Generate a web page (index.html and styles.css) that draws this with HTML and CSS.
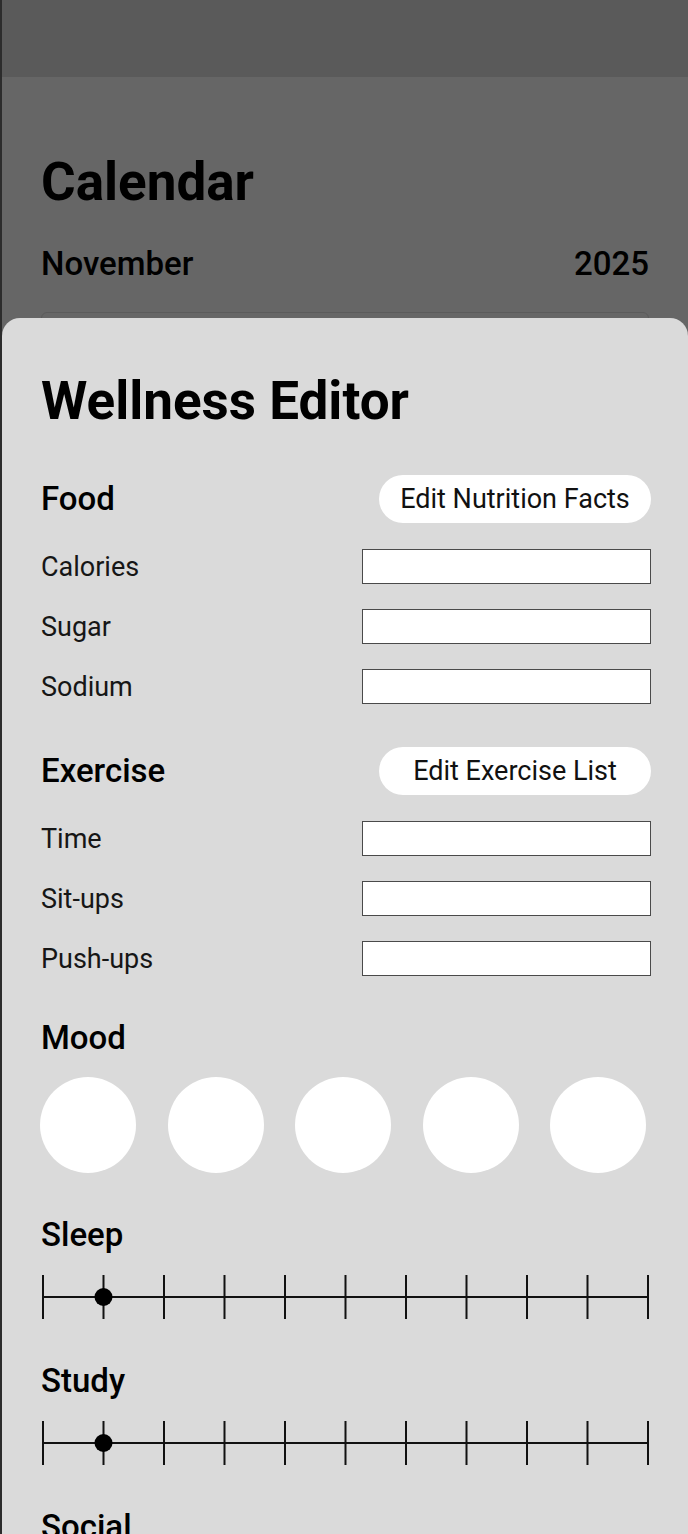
FILE: index.html
```html
<!DOCTYPE html>
<html lang="en">
<head>
  <meta charset="UTF-8" />
  <meta name="viewport" content="width=device-width, initial-scale=1.0" />
  <title>Wellness Editor</title>
  <link rel="stylesheet" href="styles.css">
</head>
<body>
  <div class="screen">

    <!-- dimmed page behind the sheet -->
    <header class="topbar"></header>
    <main class="calendar">
      <h1 class="page-title">Calendar</h1>
      <div class="month-row">
        <span>November</span>
        <span>2025</span>
      </div>
      <div class="month-card"></div>
    </main>

    <!-- bottom sheet -->
    <section class="sheet">
      <h2 class="sheet-title">Wellness Editor</h2>

      <div class="group-head">
        <h3 class="section-title">Food</h3>
        <button class="pill-btn">Edit Nutrition Facts</button>
      </div>
      <div class="fields">
        <label class="field"><span>Calories</span><input type="text"></label>
        <label class="field"><span>Sugar</span><input type="text"></label>
        <label class="field"><span>Sodium</span><input type="text"></label>
      </div>

      <div class="group-head">
        <h3 class="section-title">Exercise</h3>
        <button class="pill-btn">Edit Exercise List</button>
      </div>
      <div class="fields">
        <label class="field"><span>Time</span><input type="text"></label>
        <label class="field"><span>Sit-ups</span><input type="text"></label>
        <label class="field"><span>Push-ups</span><input type="text"></label>
      </div>

      <div class="block">
        <h3 class="section-title">Mood</h3>
        <div class="moods">
          <button class="mood"></button>
          <button class="mood"></button>
          <button class="mood"></button>
          <button class="mood"></button>
          <button class="mood"></button>
        </div>
      </div>

      <div class="block">
        <h3 class="section-title">Sleep</h3>
        <svg class="scale" viewBox="0 0 611 44" width="611" height="44">
          <line x1="2" y1="22" x2="607" y2="22" />
          <g class="ticks">
            <line x1="2" y1="0" x2="2" y2="44" />
            <line x1="62.5" y1="0" x2="62.5" y2="44" />
            <line x1="123" y1="0" x2="123" y2="44" />
            <line x1="183.5" y1="0" x2="183.5" y2="44" />
            <line x1="244" y1="0" x2="244" y2="44" />
            <line x1="304.5" y1="0" x2="304.5" y2="44" />
            <line x1="365" y1="0" x2="365" y2="44" />
            <line x1="425.5" y1="0" x2="425.5" y2="44" />
            <line x1="486" y1="0" x2="486" y2="44" />
            <line x1="546.5" y1="0" x2="546.5" y2="44" />
            <line x1="607" y1="0" x2="607" y2="44" />
          </g>
          <circle cx="62.5" cy="22" r="9" />
        </svg>
      </div>

      <div class="block">
        <h3 class="section-title">Study</h3>
        <svg class="scale" viewBox="0 0 611 44" width="611" height="44">
          <line x1="2" y1="22" x2="607" y2="22" />
          <g class="ticks">
            <line x1="2" y1="0" x2="2" y2="44" />
            <line x1="62.5" y1="0" x2="62.5" y2="44" />
            <line x1="123" y1="0" x2="123" y2="44" />
            <line x1="183.5" y1="0" x2="183.5" y2="44" />
            <line x1="244" y1="0" x2="244" y2="44" />
            <line x1="304.5" y1="0" x2="304.5" y2="44" />
            <line x1="365" y1="0" x2="365" y2="44" />
            <line x1="425.5" y1="0" x2="425.5" y2="44" />
            <line x1="486" y1="0" x2="486" y2="44" />
            <line x1="546.5" y1="0" x2="546.5" y2="44" />
            <line x1="607" y1="0" x2="607" y2="44" />
          </g>
          <circle cx="62.5" cy="22" r="9" />
        </svg>
      </div>

      <div class="block">
        <h3 class="section-title">Social</h3>
      </div>
    </section>

  </div>
</body>
</html>
```

FILE: styles.css
```css
* { box-sizing: border-box; }

html, body {
  margin: 0;
  padding: 0;
  background: #666666;
  font-family: Roboto, 'Liberation Sans', sans-serif;
  color: #000;
}

.screen {
  position: relative;
  height: 1534px;
  overflow: hidden;
  border-left: 2px solid #2c2c2c;
}

/* dimmed calendar page */
.topbar {
  height: 77px;
  background: #5a5a5a;
}

.calendar {
  padding: 0 39px 0 39px;
}

.page-title {
  margin: 75px 0 0;
  font-size: 53px;
  line-height: 60px;
  font-weight: 700;
}

.month-row {
  display: flex;
  justify-content: space-between;
  margin-top: 32px;
  font-size: 33px;
  line-height: 40px;
  font-weight: 500;
}

.month-card {
  margin-top: 28px;
  height: 400px;
  border: 1px solid #5b5b5b;
  border-radius: 6px;
}

/* bottom sheet over the page */
.sheet {
  position: absolute;
  top: 318px;
  left: 0;
  right: 0;
  bottom: 0;
  padding: 53px 37px 0 39px;
  background: #dadada;
  border-radius: 18px 18px 0 0;
}

.sheet-title {
  margin: 0;
  font-size: 53px;
  line-height: 60px;
  font-weight: 700;
}

.section-title {
  margin: 0;
  font-size: 33px;
  line-height: 40px;
  font-weight: 500;
}

.group-head {
  display: flex;
  align-items: center;
  justify-content: space-between;
  height: 48px;
  margin-top: 44px;
}

.fields + .group-head { margin-top: 43px; }

.pill-btn {
  width: 272px;
  height: 48px;
  padding: 0;
  border: none;
  border-radius: 24px;
  background: #fff;
  color: #111;
  font-family: inherit;
  font-size: 27px;
}

.fields {
  display: flex;
  flex-direction: column;
  gap: 25px;
  margin-top: 26px;
}

.field {
  display: flex;
  align-items: center;
  justify-content: space-between;
  height: 35px;
  font-size: 27px;
  color: #161616;
}

.field input {
  width: 289px;
  height: 35px;
  margin: 0;
  border: 1px solid #4a4a4a;
  background: #fff;
}

.block { margin-top: 42px; }

.moods {
  display: flex;
  gap: 31.5px;
  margin-top: 19px;
  margin-left: -1px;
}

.mood {
  width: 96px;
  height: 96px;
  padding: 0;
  border: none;
  border-radius: 50%;
  background: #fff;
}

.scale {
  display: block;
  margin-top: 20px;
  stroke: #111;
  stroke-width: 2;
}

.scale circle {
  fill: #000;
  stroke: none;
}
```
